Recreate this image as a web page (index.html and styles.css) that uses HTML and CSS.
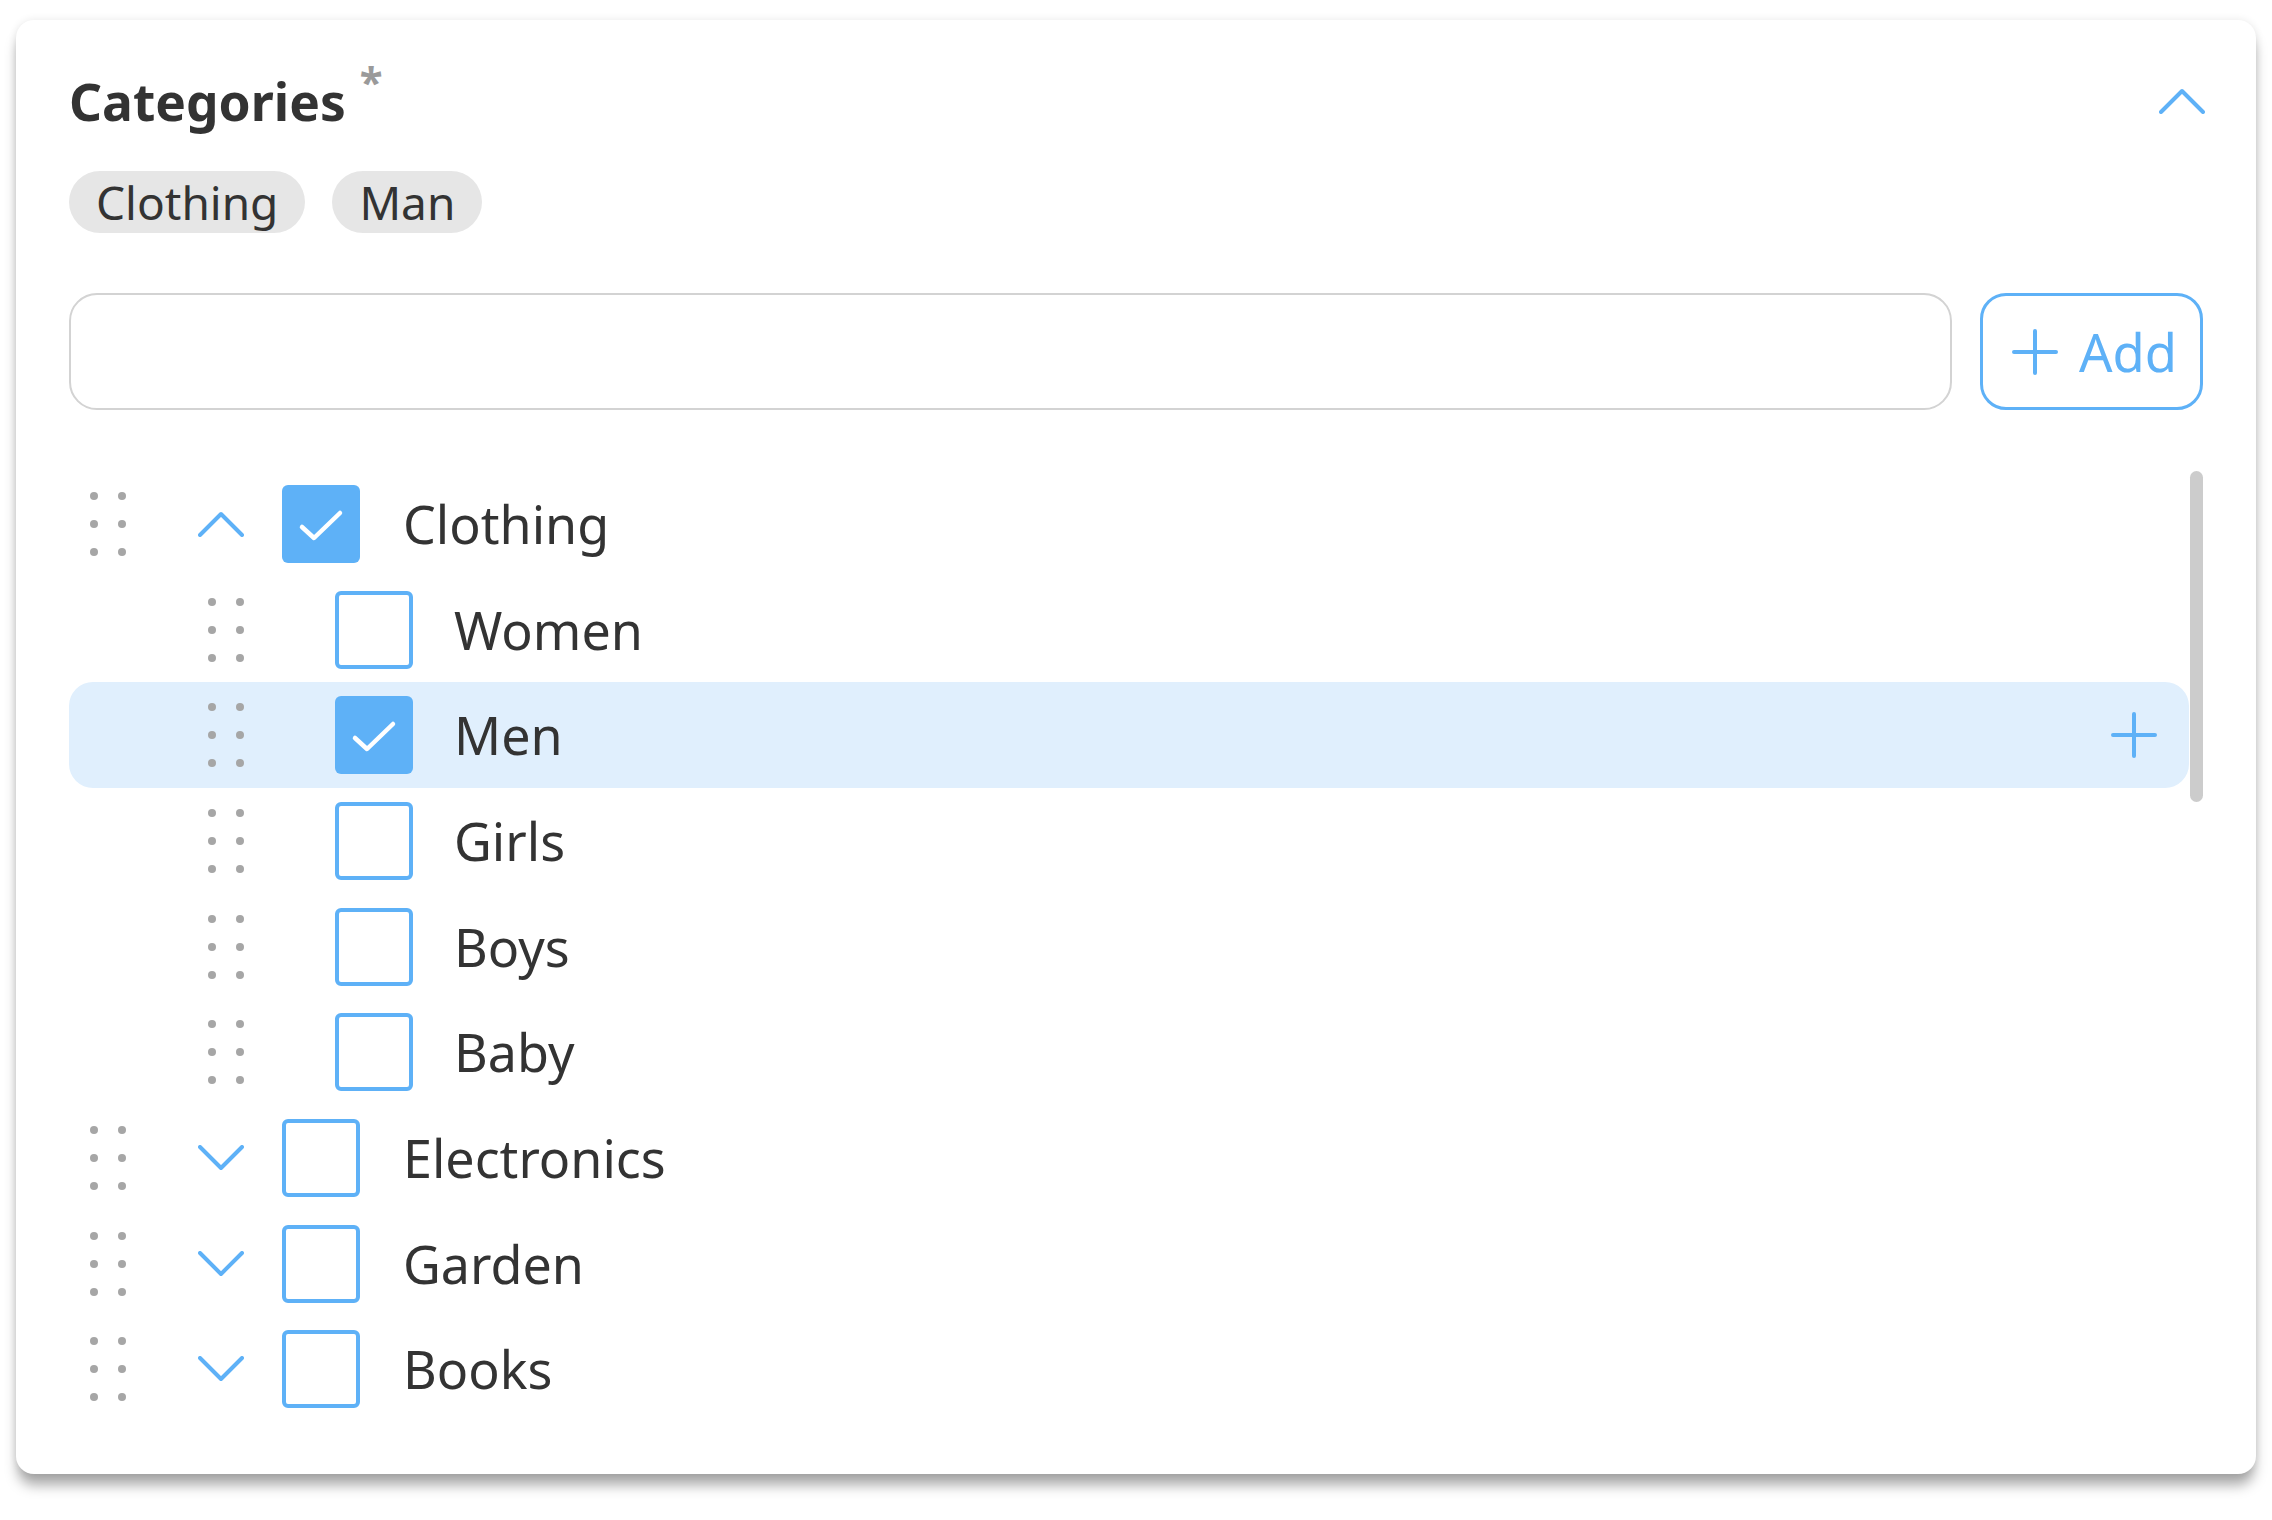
FILE: index.html
```html
<!DOCTYPE html>
<html lang="en">
<head>
<meta charset="utf-8">
<title>Categories</title>
<link rel="stylesheet" href="styles.css">
</head>
<body>
<section class="card">
  <header class="card-header">
    <h2 class="title">Categories<span class="req">*</span></h2>
    <button class="collapse-btn" aria-label="Collapse">
      <svg class="chev" viewBox="0 0 46 26" width="46" height="26"><path d="M2 24 L23 3 L44 24" fill="none" stroke="#5eb1f7" stroke-width="4" stroke-linecap="round" stroke-linejoin="round"/></svg>
    </button>
  </header>

  <div class="chips">
    <span class="chip">Clothing</span>
    <span class="chip">Man</span>
  </div>

  <div class="add-row">
    <input class="text-input" type="text" aria-label="New category">
    <button class="add-btn">
      <svg viewBox="0 0 46 46" width="46" height="46"><path d="M23 2 V44 M2 23 H44" stroke="#5eb1f7" stroke-width="4" stroke-linecap="round"/></svg>
      <span>Add</span>
    </button>
  </div>

  <div class="tree-wrap">
    <ul class="tree">
      <li class="row parent">
        <span class="handle"><svg viewBox="0 0 36 64" width="36" height="64"><g fill="#a6a6a6"><circle cx="4" cy="4" r="4"/><circle cx="32" cy="4" r="4"/><circle cx="4" cy="32" r="4"/><circle cx="32" cy="32" r="4"/><circle cx="4" cy="60" r="4"/><circle cx="32" cy="60" r="4"/></g></svg></span>
        <span class="expander"><svg viewBox="0 0 46 26" width="46" height="26"><path d="M2 24 L23 3 L44 24" fill="none" stroke="#5eb1f7" stroke-width="4" stroke-linecap="round" stroke-linejoin="round"/></svg></span>
        <span class="cb checked"><svg viewBox="0 0 78 78" width="78" height="78"><path d="M20 42 L32 53 L58 28" fill="none" stroke="#fff" stroke-width="4.5" stroke-linecap="round" stroke-linejoin="round"/></svg></span>
        <span class="label">Clothing</span>
      </li>
      <li class="row child">
        <span class="handle"><svg viewBox="0 0 36 64" width="36" height="64"><g fill="#a6a6a6"><circle cx="4" cy="4" r="4"/><circle cx="32" cy="4" r="4"/><circle cx="4" cy="32" r="4"/><circle cx="32" cy="32" r="4"/><circle cx="4" cy="60" r="4"/><circle cx="32" cy="60" r="4"/></g></svg></span>
        <span class="cb"></span>
        <span class="label">Women</span>
      </li>
      <li class="row child active">
        <span class="handle"><svg viewBox="0 0 36 64" width="36" height="64"><g fill="#a6a6a6"><circle cx="4" cy="4" r="4"/><circle cx="32" cy="4" r="4"/><circle cx="4" cy="32" r="4"/><circle cx="32" cy="32" r="4"/><circle cx="4" cy="60" r="4"/><circle cx="32" cy="60" r="4"/></g></svg></span>
        <span class="cb checked"><svg viewBox="0 0 78 78" width="78" height="78"><path d="M20 42 L32 53 L58 28" fill="none" stroke="#fff" stroke-width="4.5" stroke-linecap="round" stroke-linejoin="round"/></svg></span>
        <span class="label">Men</span>
        <span class="row-add"><svg viewBox="0 0 46 46" width="46" height="46"><path d="M23 2 V44 M2 23 H44" stroke="#5eb1f7" stroke-width="4" stroke-linecap="round"/></svg></span>
      </li>
      <li class="row child">
        <span class="handle"><svg viewBox="0 0 36 64" width="36" height="64"><g fill="#a6a6a6"><circle cx="4" cy="4" r="4"/><circle cx="32" cy="4" r="4"/><circle cx="4" cy="32" r="4"/><circle cx="32" cy="32" r="4"/><circle cx="4" cy="60" r="4"/><circle cx="32" cy="60" r="4"/></g></svg></span>
        <span class="cb"></span>
        <span class="label">Girls</span>
      </li>
      <li class="row child">
        <span class="handle"><svg viewBox="0 0 36 64" width="36" height="64"><g fill="#a6a6a6"><circle cx="4" cy="4" r="4"/><circle cx="32" cy="4" r="4"/><circle cx="4" cy="32" r="4"/><circle cx="32" cy="32" r="4"/><circle cx="4" cy="60" r="4"/><circle cx="32" cy="60" r="4"/></g></svg></span>
        <span class="cb"></span>
        <span class="label">Boys</span>
      </li>
      <li class="row child">
        <span class="handle"><svg viewBox="0 0 36 64" width="36" height="64"><g fill="#a6a6a6"><circle cx="4" cy="4" r="4"/><circle cx="32" cy="4" r="4"/><circle cx="4" cy="32" r="4"/><circle cx="32" cy="32" r="4"/><circle cx="4" cy="60" r="4"/><circle cx="32" cy="60" r="4"/></g></svg></span>
        <span class="cb"></span>
        <span class="label">Baby</span>
      </li>
      <li class="row parent">
        <span class="handle"><svg viewBox="0 0 36 64" width="36" height="64"><g fill="#a6a6a6"><circle cx="4" cy="4" r="4"/><circle cx="32" cy="4" r="4"/><circle cx="4" cy="32" r="4"/><circle cx="32" cy="32" r="4"/><circle cx="4" cy="60" r="4"/><circle cx="32" cy="60" r="4"/></g></svg></span>
        <span class="expander"><svg viewBox="0 0 46 26" width="46" height="26"><path d="M2 2 L23 23 L44 2" fill="none" stroke="#5eb1f7" stroke-width="4" stroke-linecap="round" stroke-linejoin="round"/></svg></span>
        <span class="cb"></span>
        <span class="label">Electronics</span>
      </li>
      <li class="row parent">
        <span class="handle"><svg viewBox="0 0 36 64" width="36" height="64"><g fill="#a6a6a6"><circle cx="4" cy="4" r="4"/><circle cx="32" cy="4" r="4"/><circle cx="4" cy="32" r="4"/><circle cx="32" cy="32" r="4"/><circle cx="4" cy="60" r="4"/><circle cx="32" cy="60" r="4"/></g></svg></span>
        <span class="expander"><svg viewBox="0 0 46 26" width="46" height="26"><path d="M2 2 L23 23 L44 2" fill="none" stroke="#5eb1f7" stroke-width="4" stroke-linecap="round" stroke-linejoin="round"/></svg></span>
        <span class="cb"></span>
        <span class="label">Garden</span>
      </li>
      <li class="row parent">
        <span class="handle"><svg viewBox="0 0 36 64" width="36" height="64"><g fill="#a6a6a6"><circle cx="4" cy="4" r="4"/><circle cx="32" cy="4" r="4"/><circle cx="4" cy="32" r="4"/><circle cx="32" cy="32" r="4"/><circle cx="4" cy="60" r="4"/><circle cx="32" cy="60" r="4"/></g></svg></span>
        <span class="expander"><svg viewBox="0 0 46 26" width="46" height="26"><path d="M2 2 L23 23 L44 2" fill="none" stroke="#5eb1f7" stroke-width="4" stroke-linecap="round" stroke-linejoin="round"/></svg></span>
        <span class="cb"></span>
        <span class="label">Books</span>
      </li>
    </ul>
    <div class="scrollbar"><div class="thumb"></div></div>
  </div>
</section>
</body>
</html>
```

FILE: styles.css
```css
* { box-sizing: border-box; }

html, body {
  margin: 0;
  padding: 0;
  background: #ffffff;
}

body {
  font-family: "Noto Sans", "Open Sans", sans-serif;
  color: #333333;
  padding: 20px 16px 45px 16px;
}

.card {
  width: 2240px;
  background: #ffffff;
  border-radius: 18px;
  box-shadow: 0 13px 13px -2px rgba(0, 0, 0, 0.34), 0 0 8px rgba(0, 0, 0, 0.09);
  padding: 44px 53px 52px 53px;
}

.card-header {
  display: flex;
  align-items: center;
  justify-content: space-between;
  height: 74px;
}

.title {
  margin: 0;
  font-size: 51.5px;
  font-weight: 700;
  line-height: 74px;
  color: #333333;
  display: flex;
  align-items: flex-start;
}

.req {
  font-size: 42px;
  line-height: 42px;
  color: #9a9a9a;
  margin-left: 14px;
  margin-top: -4px;
}

.collapse-btn {
  border: 0;
  background: none;
  padding: 0;
  margin: 0 -2px 0 0;
  display: flex;
}

.chips {
  display: flex;
  gap: 27px;
  margin-top: 33px;
}

.chip {
  height: 62px;
  line-height: 62px;
  padding: 0 27px;
  border-radius: 31px;
  background: #e6e6e6;
  font-size: 46px;
  color: #333333;
}

.add-row {
  display: flex;
  gap: 28px;
  margin-top: 60px;
  height: 117px;
}

.text-input {
  flex: 1;
  height: 117px;
  border: 2px solid #d3d3d3;
  border-radius: 28px;
  background: #ffffff;
  font-family: inherit;
  font-size: 52px;
  outline: none;
}

.add-btn {
  width: 223px;
  height: 117px;
  border: 3px solid #5eb1f7;
  border-radius: 26px;
  background: #ffffff;
  display: flex;
  align-items: center;
  gap: 21px;
  padding: 0 0 0 29px;
  font-family: inherit;
  font-size: 52.5px;
  color: #5eb1f7;
}

.tree-wrap {
  display: flex;
  margin-top: 61px;
}

.tree {
  list-style: none;
  margin: 0;
  padding: 0;
  flex: 1;
}

.row {
  display: flex;
  align-items: center;
  height: 105.7px;
  border-radius: 24px;
}

.row.active {
  background: #e0effd;
}

.row.parent { padding-left: 21px; }
.row.child { padding-left: 139px; }

.handle {
  display: flex;
  width: 36px;
}

.expander {
  display: flex;
  margin-left: 72px;
  width: 46px;
}

.cb {
  width: 78px;
  height: 78px;
  border: 4px solid #5eb1f7;
  border-radius: 6px;
  display: flex;
  flex-shrink: 0;
}

.cb.checked {
  background: #5eb1f7;
  border: 0;
}

.row.parent .cb { margin-left: 38px; }
.row.child .cb { margin-left: 91px; }

.label {
  font-size: 52px;
  color: #333333;
  line-height: 1;
}

.row.parent .label { margin-left: 43px; }
.row.child .label { margin-left: 41px; }

.row-add {
  margin-left: auto;
  margin-right: 32px;
  display: flex;
}

.scrollbar {
  width: 13px;
  margin-left: 1px;
}

.thumb {
  height: 331px;
  background: #cccccc;
  border-radius: 7px;
}
```
